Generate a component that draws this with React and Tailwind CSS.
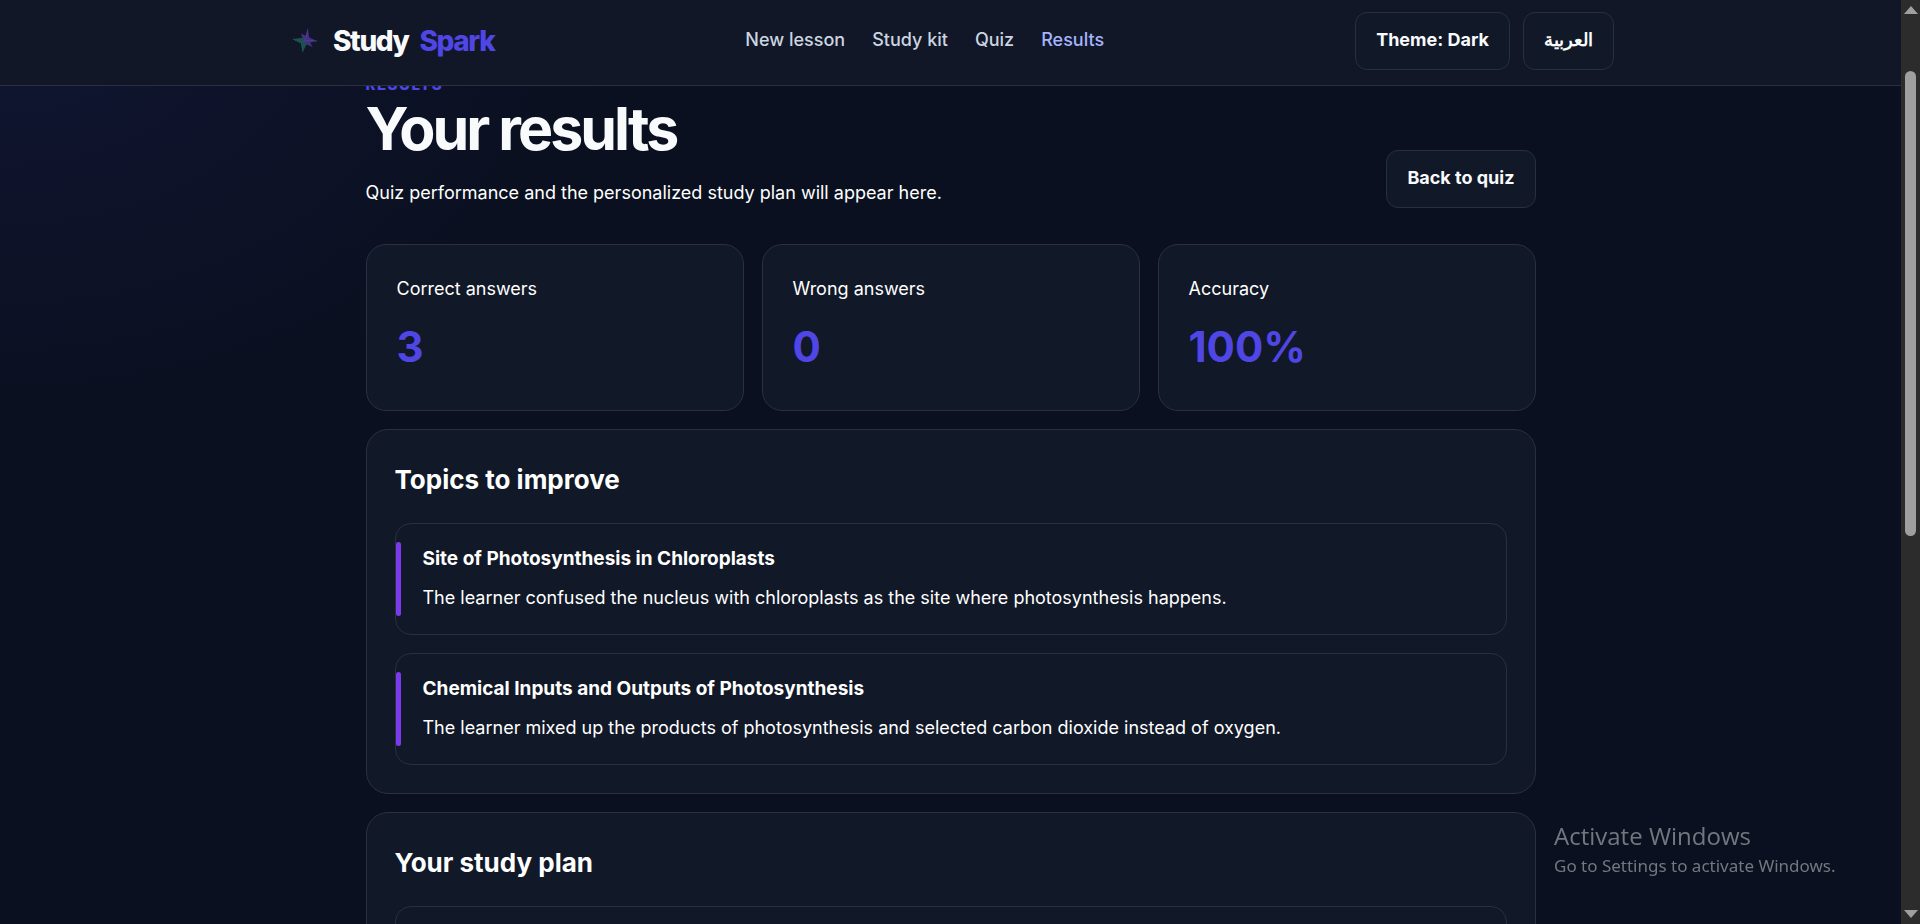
const stats = [
  { label: "Correct answers", value: "3" },
  { label: "Wrong answers", value: "0" },
  { label: "Accuracy", value: "100%" },
];

const topics = [
  {
    title: "Site of Photosynthesis in Chloroplasts",
    text: "The learner confused the nucleus with chloroplasts as the site where photosynthesis happens.",
  },
  {
    title: "Chemical Inputs and Outputs of Photosynthesis",
    text: "The learner mixed up the products of photosynthesis and selected carbon dioxide instead of oxygen.",
  },
];

const links = ["New lesson", "Study kit", "Quiz", "Results"];

const buttonClass =
  "h-[58px] cursor-pointer rounded-xl border border-[#282f3d] bg-[#111827] px-5 pb-0.5 text-lg font-bold text-[#f8fafc]";

function SparkLogo() {
  return (
    <svg viewBox="0 0 24 24" className="size-6" aria-hidden="true">
      <path d="M14.8 0 16.3 8.6 24 12 17.4 13.4 19.5 18 13.5 15.5 10.5 13 9.5 9.5 8 4.5 12.6 6.8Z" fill="#41327f" />
      <path d="M0 10 9.5 8.8 11.2 12.2 14 14.6 9.8 23 8.4 14.2Z" fill="#1d4f50" />
      <path d="M0 10 8.4 14.2 9.8 23" fill="none" stroke="#1f7a5c" strokeWidth="0.8" strokeDasharray="1.4 0.8" />
      <path d="M14.8 0 13.2 8.5 10.5 12.5M24 12 16 11.4 11.2 12.2" fill="none" stroke="#5a44a8" strokeWidth="0.8" strokeDasharray="1.4 0.8" />
    </svg>
  );
}

function Header() {
  return (
    <header className="relative z-10 border-b border-[#2a303e] bg-[#111726]">
      <div className="mx-auto flex h-[85px] max-w-[1327px] items-center justify-between pb-1">
        <a href="#home" className="flex items-center gap-4 pl-[6px]">
          <SparkLogo />
          <span className="flex gap-[11px] text-[28px] font-extrabold tracking-tighter text-[#f8fafc]">
            Study <span className="text-[#4f46e5]">Spark</span>
          </span>
        </a>
        <nav className="flex gap-[27px] pb-0.5 text-lg font-medium text-[#cbd5e1]">
          {links.map((link) => (
            <a key={link} href="#" className={link === "Results" ? "text-[#a5b4fc]" : ""}>
              {link}
            </a>
          ))}
        </nav>
        <div className="flex gap-[13px]">
          <button type="button" className={buttonClass}>Theme: Dark</button>
          <button type="button" lang="ar" className={buttonClass}>العربية</button>
        </div>
      </div>
    </header>
  );
}

function Panel({ title, children }) {
  return (
    <section className="rounded-[22px] border border-[#2a303e] bg-[#111827] p-7">
      <h2 className="mb-[21px] text-[26px] leading-[44px] font-bold">{title}</h2>
      <div className="flex flex-col gap-[18px]">{children}</div>
    </section>
  );
}

function Topic({ title, text }) {
  return (
    <article className="relative rounded-2xl border border-[#282f3d] px-[27px] py-[18px]">
      <span className="absolute inset-y-[18px] left-0 w-[5px] rounded-full bg-[#7c3aed]" />
      <h3 className="text-[19px] leading-[34px] font-bold">{title}</h3>
      <p className="mt-1 text-lg leading-9">{text}</p>
    </article>
  );
}

function ScrollTrack() {
  return (
    <div className="flex w-[19px] shrink-0 flex-col items-center justify-between bg-[#2c2c2c] py-[6px]" aria-hidden="true">
      <svg viewBox="0 0 14 8" className="h-2 w-[14px]"><path d="M7 0 14 8H0Z" fill="#9f9f9f" /></svg>
      <div className="mt-[57px] h-[465px] w-[11px] rounded-full bg-[#9f9f9f]" />
      <div className="grow" />
      <svg viewBox="0 0 14 8" className="h-2 w-[14px]"><path d="M0 0H14L7 8Z" fill="#9f9f9f" /></svg>
    </div>
  );
}

export default function App() {
  return (
    <div className="flex h-screen overflow-hidden bg-[#0a101f] font-['Inter',sans-serif] text-white">
      <div className="min-w-0 grow overflow-hidden bg-[radial-gradient(620px_440px_at_top_left,rgba(79,70,229,0.1),transparent)]">
        <Header />
        <main className="mx-auto -mt-[13px] flex max-w-[1170px] flex-col gap-[18px]">
          <div className="mb-[18px] flex items-end justify-between">
            <div>
              <p className="text-[15px] leading-6 font-extrabold tracking-widest text-[#4f46e5] uppercase">Results</p>
              <h1 className="text-[59px] leading-[64px] font-bold tracking-tighter text-[#f8fafc]">Your results</h1>
              <p className="mt-[18px] pb-px text-lg leading-7">Quiz performance and the personalized study plan will appear here.</p>
            </div>
            <button type="button" className={buttonClass}>Back to quiz</button>
          </div>
          <div className="grid grid-cols-3 gap-[18px]">
            {stats.map((stat) => (
              <div key={stat.label} className="h-[167px] rounded-[20px] border border-[#2a303e] bg-[#111827] px-[30px] pt-7">
                <p className="text-lg leading-8">{stat.label}</p>
                <p className="mt-3 text-[42px] leading-[60px] font-bold text-[#4f46e5]">{stat.value}</p>
              </div>
            ))}
          </div>
          <Panel title="Topics to improve">
            {topics.map((topic) => (
              <Topic key={topic.title} {...topic} />
            ))}
          </Panel>
          <Panel title="Your study plan">
            <article className="h-28 rounded-2xl border border-[#282f3d]" />
          </Panel>
        </main>
      </div>
      <ScrollTrack />
      <aside className="pointer-events-none fixed bottom-[44px] left-[calc(100%-366px)] text-[#74777f]">
        <p className="font-['Open_Sans',sans-serif] text-2xl leading-8">Activate Windows</p>
        <p className="font-['Noto_Sans',sans-serif] text-[17px] leading-7">Go to Settings to activate Windows.</p>
      </aside>
    </div>
  );
}
